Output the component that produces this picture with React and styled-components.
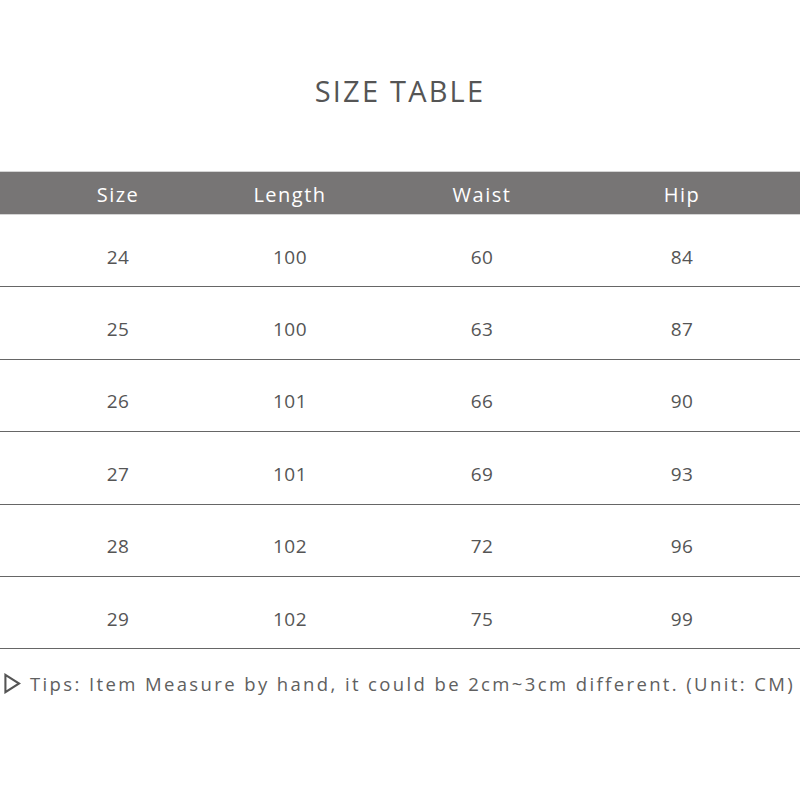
import styled, { createGlobalStyle } from "styled-components";

// Size chart data (cm)
const HEADERS = ["Size", "Length", "Waist", "Hip"];
const ROWS = [
    [24, 100, 60, 84],
    [25, 100, 63, 87],
    [26, 101, 66, 90],
    [27, 101, 69, 93],
    [28, 102, 72, 96],
    [29, 102, 75, 99],
];

const GlobalStyle = createGlobalStyle`
    body {
        margin: 0;
        background: #ffffff;
        font-family: "Open Sans", "Noto Sans", sans-serif;
    }
`;

const App = () => {
    return (
        <Page>
            <GlobalStyle />
            <Title>SIZE TABLE</Title>
            <HeaderRow>
                {HEADERS.map((h) => (
                    <Cell key={h} header>{h}</Cell>
                ))}
            </HeaderRow>
            {ROWS.map((row) => (
                <Row key={row[0]}>
                    {row.map((value, i) => (
                        <Cell key={i}>{value}</Cell>
                    ))}
                </Row>
            ))}
            <Tips>
                <Arrow viewBox="0 0 18 22">
                    <path d="M1.5 1.8 L16 11 L1.5 20.2 Z" fill="none" stroke="#555" strokeWidth="2.2" strokeLinejoin="miter" />
                </Arrow>
                Tips: Item Measure by hand, it could be 2cm~3cm different. (Unit: CM)
            </Tips>
        </Page>
    );
};

const Page = styled.div`
    width: 800px;
    height: 800px;
    background: #ffffff;
    display: flex;
    flex-direction: column;
`;

const Title = styled.h1`
    margin: 0;
    height: 171px;
    padding-top: 72px;
    box-sizing: border-box;
    text-align: center;
    font-size: 29px;
    font-weight: 500;
    letter-spacing: 2.2px;
    line-height: 38px;
    color: #555555;
`;

// Shared column grid so headers and values line up
const Grid = styled.div`
    display: grid;
    grid-template-columns: 236px 108px 276px 124px 1fr;
    align-items: center;
    box-sizing: border-box;
`;

const HeaderRow = styled(Grid)`
    height: 44px;
    padding-top: 2px;
    background: #777575;
    border-top: 1px solid #d4d4d4;
    border-bottom: 1px solid #d4d4d4;
`;

const Row = styled(Grid)`
    height: 72.4px;
    padding-top: 12px;
    border-bottom: 1px solid #666666;
`;

const Cell = styled.div`
    text-align: center;
    font-size: ${(props) => (props.header ? "20px" : "19px")};
    letter-spacing: ${(props) => (props.header ? "1.5px" : "0.5px")};
    color: ${(props) => (props.header ? "#ffffff" : "#555555")};
`;

const Tips = styled.div`
    display: flex;
    align-items: center;
    gap: 9px;
    padding: 22px 0 0 4px;
    font-size: 18.5px;
    letter-spacing: 2.38px;
    color: #606060;
    white-space: nowrap;
`;

const Arrow = styled.svg`
    width: 17px;
    height: 21px;
    flex-shrink: 0;
`;

export default App;
